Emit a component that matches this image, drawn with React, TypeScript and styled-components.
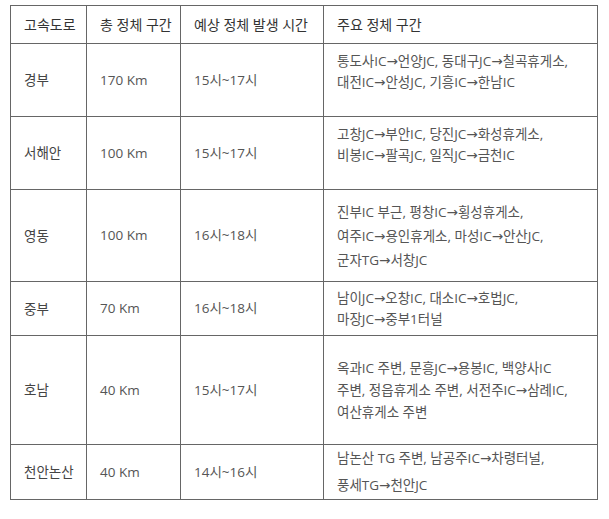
import React from "react";
import styled, { createGlobalStyle } from "styled-components";

const Global = createGlobalStyle`
  html, body { margin: 0; padding: 0; background: #fff; }
  body { font-family: "Open Sans", "DejaVu Sans", "Noto Sans CJK KR", sans-serif; }
`;

const Page = styled.div`
  padding: 5px 0 0 10px;
`;

const Table = styled.table`
  border-collapse: collapse;
  table-layout: fixed;
  width: 587px;
`;

const Row = styled.tr<{ $h: number }>`
  height: ${(p) => p.$h}px;
`;

const HeadCell = styled.th`
  border: 1px solid #666;
  padding: 0 13px;
  text-align: left;
  font-weight: 400;
  font-size: 14px;
  line-height: 20px;
  color: #333;
  vertical-align: middle;
  white-space: nowrap;
`;

const NameCell = styled.td`
  border: 1px solid #666;
  padding: 0 13px;
  font-size: 13.5px;
  line-height: 20px;
  color: #444;
  vertical-align: middle;
  white-space: nowrap;
`;

const Cell = styled.td<{ $lh?: number; $pb?: number }>`
  border: 1px solid #666;
  padding: 0 13px ${(p) => p.$pb ?? 0}px 13px;
  font-size: 13.5px;
  line-height: ${(p) => p.$lh ?? 21}px;
  color: #555;
  vertical-align: middle;
  white-space: nowrap;
`;

type RowData = {
  name: string;
  dist: string;
  time: string;
  lines: string[];
  h: number;
  lh: number;
  pb?: number;
};

const rows: RowData[] = [
  {
    name: "경부",
    dist: "170 Km",
    time: "15시~17시",
    lines: ["통도사IC→언양JC, 동대구JC→칠곡휴게소,", "대전IC→안성JC, 기흥IC→한남IC"],
    h: 73,
    lh: 21,
    pb: 16,
  },
  {
    name: "서해안",
    dist: "100 Km",
    time: "15시~17시",
    lines: ["고창JC→부안IC, 당진JC→화성휴게소,", "비봉IC→팔곡JC, 일직JC→금천IC"],
    h: 73,
    lh: 21,
    pb: 16,
  },
  {
    name: "영동",
    dist: "100 Km",
    time: "16시~18시",
    lines: ["진부IC 부근, 평창IC→횡성휴게소,", "여주IC→용인휴게소, 마성IC→안산JC,", "군자TG→서창JC"],
    h: 92,
    lh: 24,
  },
  {
    name: "중부",
    dist: "70 Km",
    time: "16시~18시",
    lines: ["남이JC→오창IC, 대소IC→호법JC,", "마장JC→중부1터널"],
    h: 54,
    lh: 21,
  },
  {
    name: "호남",
    dist: "40 Km",
    time: "15시~17시",
    lines: ["옥과IC 주변, 문흥JC→용봉IC, 백양사IC", "주변, 정읍휴게소 주변, 서전주IC→삼례IC,", "여산휴게소 주변"],
    h: 109,
    lh: 22,
  },
  {
    name: "천안논산",
    dist: "40 Km",
    time: "14시~16시",
    lines: ["남논산 TG 주변, 남공주IC→차령터널,", "풍세TG→천안JC"],
    h: 55,
    lh: 27,
  },
];

export default function App() {
  return (
    <Page>
      <Global />
      <Table>
        <colgroup>
          <col style={{ width: 76 }} />
          <col style={{ width: 94 }} />
          <col style={{ width: 143 }} />
          <col style={{ width: 274 }} />
        </colgroup>
        <thead>
          <Row $h={38}>
            <HeadCell>고속도로</HeadCell>
            <HeadCell>총 정체 구간</HeadCell>
            <HeadCell>예상 정체 발생 시간</HeadCell>
            <HeadCell>주요 정체 구간</HeadCell>
          </Row>
        </thead>
        <tbody>
          {rows.map((r) => (
            <Row key={r.name} $h={r.h}>
              <NameCell>{r.name}</NameCell>
              <Cell>{r.dist}</Cell>
              <Cell>{r.time}</Cell>
              <Cell $lh={r.lh} $pb={r.pb}>
                {r.lines.map((l, i) => (
                  <React.Fragment key={i}>
                    {i > 0 && <br />}
                    {l}
                  </React.Fragment>
                ))}
              </Cell>
            </Row>
          ))}
        </tbody>
      </Table>
    </Page>
  );
}
